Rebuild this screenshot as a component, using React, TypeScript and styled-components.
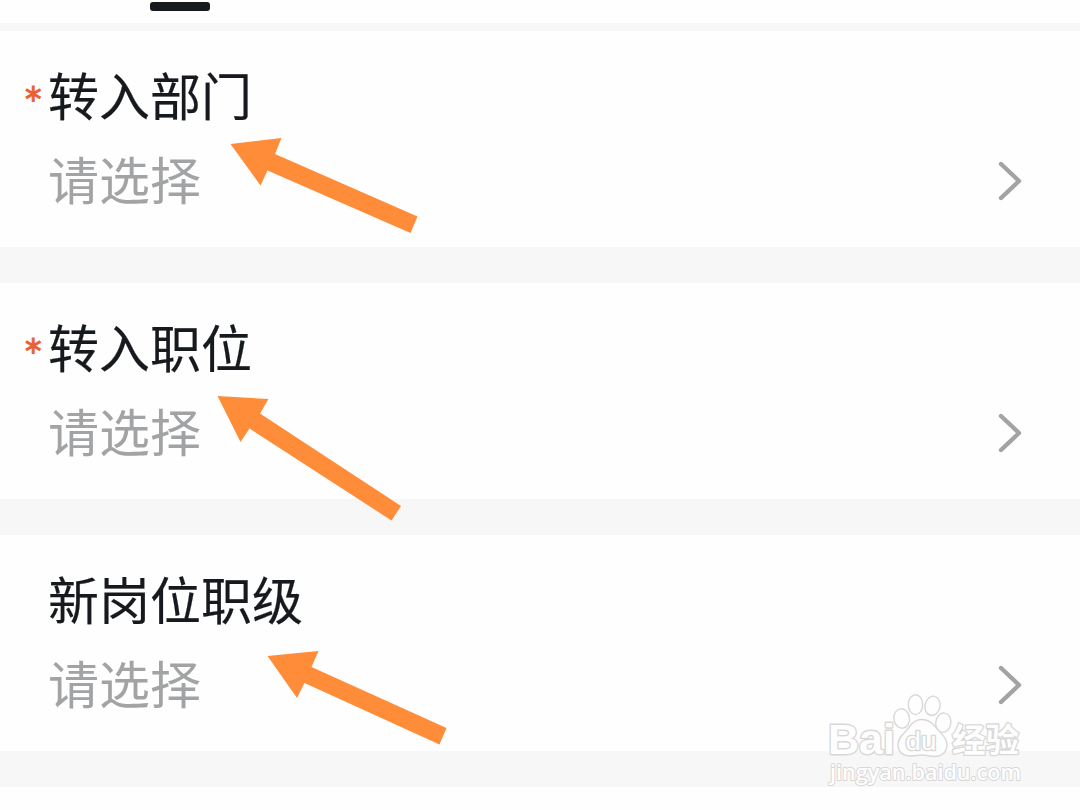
import React from 'react';
import styled, { createGlobalStyle } from 'styled-components';

const GlobalStyle = createGlobalStyle`
  * {
    box-sizing: border-box;
  }
  body {
    margin: 0;
    background-color: #fefefe;
    font-family: 'Noto Sans CJK SC', sans-serif;
  }
`;

const Container = styled.div`
  position: relative;
  display: flex;
  flex-direction: column;
  width: 1080px;
  height: 810px;
  overflow: hidden;
`;
const TabBar = styled.div`
  height: 31px;
  padding: 2px 0 0 150px;
  border-bottom: 8px solid #f7f7f7;
`;
const TabIndicator = styled.div`
  width: 60px;
  height: 9px;
  border-radius: 3px;
  background-color: #16191d;
`;

const Field = styled.div`
  display: flex;
  align-items: flex-start;
  height: 252px;
  padding: 21px 57px 0 24px;
  border-bottom: 36px solid #f7f7f7;
`;
const Texts = styled.div`
  flex: 1;
  font-size: 51px;
  line-height: 84px;
`;
const Label = styled.div`
  display: flex;
  height: 84px;
  color: #16191d;
  -webkit-text-stroke: 0.2px #16191d;
`;
const Required = styled.span`
  width: 24px;
  flex-shrink: 0;
  color: #ea6030;
  font-family: 'DejaVu Sans', sans-serif;
  font-size: 33px;
  line-height: 96px;
  padding-left: 1px;
  -webkit-text-stroke: 1px #ea6030;
`;
const Placeholder = styled.div`
  height: 84px;
  padding-left: 24px;
  color: #a2a3a4;
`;
const Chevron = styled.svg`
  width: 26px;
  height: 42px;
  margin-top: 108px;
  fill: none;
  stroke: #a3a3a3;
  stroke-width: 4.4;
  stroke-linecap: round;
  stroke-linejoin: round;
`;

const Overlay = styled.svg`
  position: absolute;
  top: 0;
  left: 0;
  pointer-events: none;
`;
const Arrow = styled.polygon`
  fill: #ff8c38;
`;
const Mark = styled.g`
  fill: #fefefe;
  stroke: #d8d8d8;
  stroke-width: 1.4;
  stroke-linejoin: round;
`;
const MarkText = styled.text<IMarkTextProps>`
  font-family: ${(props) => props.$family}, sans-serif;
  font-size: ${(props) => props.$size}px;
  font-weight: ${(props) => props.$weight};
  stroke-width: ${(props) => props.$outline};
  paint-order: stroke;
`;

interface IMarkTextProps {
  $family: string;
  $size: number;
  $weight: number;
  $outline: number;
}

interface IField {
  label: string;
  required: boolean;
}

const fields: IField[] = [
  { label: '转入部门', required: true },
  { label: '转入职位', required: true },
  { label: '新岗位职级', required: false },
];

const arrows = [
  '230.5,144 281.5,138 275,154 417.5,216.5 410.5,233 267.5,170.5 260.5,185.5',
  '217.5,396 268.5,399 260,413.5 401,506 391.5,520.5 249.5,428.5 240.5,442',
  '267.5,656 318.5,651 311.5,667 446.5,728 439.5,744.5 304.5,683 297,698',
];

function Watermark() {
  return (
    <Mark>
      <MarkText
        x="828"
        y="753.5"
        textLength="67"
        lengthAdjust="spacingAndGlyphs"
        $family="'Liberation Sans'"
        $size={43}
        $weight={700}
        $outline={2.8}
      >
        Bai
      </MarkText>
      <ellipse cx="901.7" cy="718.5" rx="7.8" ry="9.7" transform="rotate(-8 901.7 718.5)" />
      <ellipse cx="915.5" cy="704.7" rx="7.2" ry="9.9" />
      <ellipse cx="932.5" cy="705.8" rx="7.5" ry="9.7" transform="rotate(12 932.5 705.8)" />
      <ellipse cx="943.3" cy="722.7" rx="7.6" ry="9.7" transform="rotate(8 943.3 722.7)" />
      <path d="M921.500 719.500c-6 0-9.500 3-13 8.500-4 5-10.500 9-10.500 17 0 7 5 11 12 11 4.500 0 7.500-1 12-1s8 1.500 12.500 1.500c7.500 0 12.500-4.500 12.500-12 0-7.500-6.500-11-11-17-4-5.500-8.500-8-14.500-8z" />
      <MarkText
        x="905.5"
        y="749.5"
        textLength="31"
        lengthAdjust="spacingAndGlyphs"
        $family="'Liberation Sans'"
        $size={25}
        $weight={400}
        $outline={2.6}
      >
        du
      </MarkText>
      <MarkText
        x="952"
        y="751.5"
        textLength="67"
        lengthAdjust="spacingAndGlyphs"
        $family="'Noto Sans CJK SC'"
        $size={33}
        $weight={700}
        $outline={2.6}
      >
        经验
      </MarkText>
      <MarkText
        x="830"
        y="780"
        textLength="191"
        lengthAdjust="spacingAndGlyphs"
        $family="'Open Sans'"
        $size={22}
        $weight={600}
        $outline={2}
      >
        jingyan.baidu.com
      </MarkText>
    </Mark>
  );
}

function App() {
  return (
    <Container>
      <GlobalStyle />
      <TabBar>
        <TabIndicator />
      </TabBar>
      {fields.map((field) => (
        <Field key={field.label}>
          <Texts>
            <Label>
              <Required>{field.required && '*'}</Required>
              {field.label}
            </Label>
            <Placeholder>请选择</Placeholder>
          </Texts>
          <Chevron viewBox="0 0 26 42">
            <path d="M4 4L22 21L4 38" />
          </Chevron>
        </Field>
      ))}
      <Overlay width="1080" height="810">
        {arrows.map((points) => (
          <Arrow key={points} points={points} />
        ))}
        <Watermark />
      </Overlay>
    </Container>
  );
}

export default App;
